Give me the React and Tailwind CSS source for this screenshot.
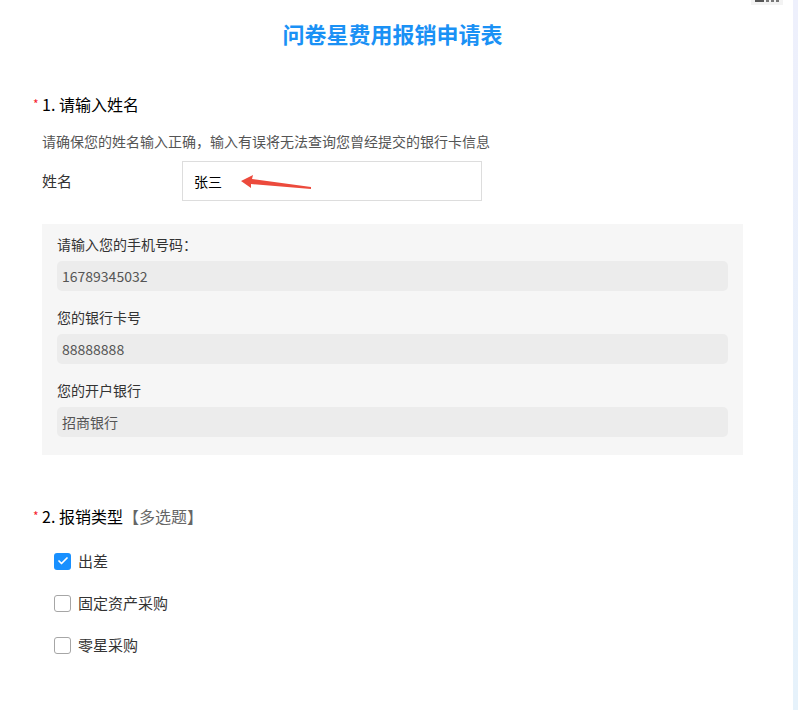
import { Check } from "lucide-react";

const FONT = { fontFamily: '"Noto Sans CJK SC", "Noto Sans", sans-serif' };

const BANK_FIELDS = [
  { label: "请输入您的手机号码：", value: "16789345032" },
  { label: "您的银行卡号", value: "88888888" },
  { label: "您的开户银行", value: "招商银行" },
];

const TYPES = [
  { label: "出差", checked: true },
  { label: "固定资产采购", checked: false },
  { label: "零星采购", checked: false },
];

function QuestionTitle({ num, text, extra }) {
  return (
    <div className="flex items-center pl-[33px] h-[24px]">
      <span className="text-[#f5222d] text-[12px] w-[9px] leading-none">*</span>
      <span className="text-[16px] text-black leading-[24px]">
        {num}. {text}
      </span>
      {extra && <span className="text-[16px] text-[#666] leading-[24px]">{extra}</span>}
    </div>
  );
}

export default function App() {
  return (
    <div className="relative flex w-full h-[710px] bg-white overflow-hidden" style={FONT}>
      {/* toolbar stub, cut off at top */}
      <div className="absolute left-[751px] top-0 flex gap-[2px] items-start w-[32px] h-[5px] bg-[#f3f3f3] px-[4px]">
        <div className="w-[10px] h-[2px] bg-[#555]" />
        <div className="w-[3px] h-[2px] bg-[#777]" />
        <div className="w-[3px] h-[2px] bg-[#777]" />
        <div className="w-[3px] h-[2px] bg-[#777]" />
      </div>

      <div className="flex-1 flex flex-col">
        <h1 className="pt-[18px] pr-[8px] text-center text-[22px] leading-[30px] font-bold text-[#1a91f5]">
          问卷星费用报销申请表
        </h1>

        {/* Question 1 */}
        <div className="mt-[44px]">
          <QuestionTitle num="1" text="请输入姓名" />
        </div>
        <p className="mt-[15px] pl-[42px] text-[14px] leading-[20px] text-[#555]">
          请确保您的姓名输入正确，输入有误将无法查询您曾经提交的银行卡信息
        </p>

        <div className="mt-[10px] pl-[42px] flex items-center">
          <span className="w-[140px] text-[15px] text-[#333]">姓名</span>
          <div className="relative w-[300px] h-[40px] border border-[#dddddd] flex items-center pl-[11px] text-[14px] text-black">
            张三
            <svg className="absolute left-0 top-0" width="300" height="40" viewBox="0 0 300 40">
              <polygon
                points="58,19 70,13 69,17 128,25 128,27 68,22 68,26"
                fill="#ec4a3c"
              />
            </svg>
          </div>
        </div>

        {/* bank info panel */}
        <div className="mt-[23px] ml-[42px] w-[701px] bg-[#f6f6f6] px-[15px] pt-[10px] pb-[18px] flex flex-col">
          {BANK_FIELDS.map((f, i) => (
            <div key={f.label} className={i > 0 ? "mt-[16px]" : ""}>
              <div className="text-[14px] leading-[20px] text-[#333]">{f.label}</div>
              <div className="mt-[7px] h-[30px] rounded-[5px] bg-[#ececec] flex items-center px-[5px] text-[14px] text-[#555]">
                {f.value}
              </div>
            </div>
          ))}
        </div>

        {/* Question 2 */}
        <div className="mt-[49px]">
          <QuestionTitle num="2" text="报销类型" extra="【多选题】" />
        </div>
        <div className="mt-[21px] pl-[54px] flex flex-col gap-[18px]">
          {TYPES.map((t) => (
            <label key={t.label} className="flex items-center h-[24px] gap-[7px]">
              {t.checked ? (
                <span className="w-[17px] h-[17px] rounded-[3px] bg-[#1890ff] flex items-center justify-center">
                  <Check className="w-[12px] h-[12px] text-white" strokeWidth={3.5} />
                </span>
              ) : (
                <span className="w-[17px] h-[17px] rounded-[3px] border border-[#a6a6a6] bg-white" />
              )}
              <span className="text-[15px] text-[#333]">{t.label}</span>
            </label>
          ))}
        </div>
      </div>

      {/* right scroll edge */}
      <div className="w-[5px] h-full bg-gradient-to-b from-[#eef0fc] to-[#e6f2fb]" />
    </div>
  );
}
